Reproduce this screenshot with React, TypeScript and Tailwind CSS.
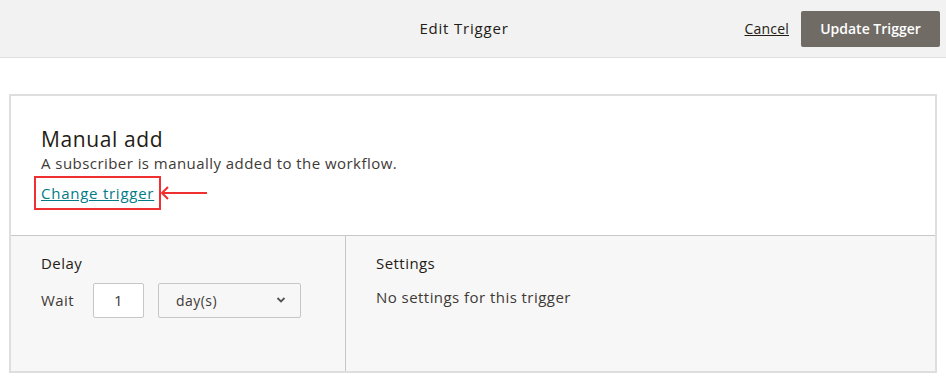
import React from "react";

const App = () => {
  return (
    <div className="min-h-[383px] bg-white font-['Open_Sans',sans-serif] text-[#241c15]">
      <header className="relative flex h-[58px] items-center justify-end border-b border-[#e0e0e0] bg-[#f2f2f2] pr-[6px]">
        <h1 className="absolute left-1/2 ml-[-9px] -translate-x-1/2 text-[15px] tracking-[0.8px] text-[#241c15]">Edit Trigger</h1>
        <a className="mr-[12px] text-[14px] tracking-[0.2px] text-[#241c15] underline">Cancel</a>
        <button className="h-[36px] w-[139px] rounded-[2px] bg-[#716b66] text-[14px] font-semibold text-white">
          Update Trigger
        </button>
      </header>

      <div className="px-[9px] pt-[36px]">
        <div className="border-2 border-[#dedede]">
          <div className="h-[139px] bg-white pl-[30px] pt-[31px] tracking-[0.45px]">
            <h2 className="text-[21px] leading-[24px] tracking-[0.6px] text-[#241c15]">Manual add</h2>
            <p className="mt-[2px] text-[15px] leading-[20px] text-[#3e3a36]">
              A subscriber is manually added to the workflow.
            </p>
            <div className="mt-[3px] flex items-center">
              <span className="-ml-[7px] border-2 border-[#f03030] px-[5px] py-[3px]">
                <a className="text-[15px] leading-[20px] tracking-[0.75px] text-[#007c89] underline">Change trigger</a>
              </span>
              <svg width="48" height="14" viewBox="0 0 48 14" className="-ml-[1px]">
                <path d="M2 7H47" stroke="#f03030" strokeWidth="2" />
                <path d="M8 1L2 7L8 13" stroke="#f03030" strokeWidth="2" fill="none" />
              </svg>
            </div>
          </div>
          <div className="flex h-[136px] border-t border-[#c7c7c7] bg-[#f7f7f7] tracking-[0.45px]">
            <div className="w-[335px] border-r border-[#c7c7c7] pl-[30px] pt-[16px]">
              <div className="text-[15px] font-medium">Delay</div>
              <div className="mt-[8px] flex items-center">
                <span className="w-[52px] text-[15px] text-[#3e3a36]">Wait</span>
                <div className="flex h-[35px] w-[51px] items-center justify-center rounded-[2px] border border-[#c7c7c7] bg-white text-[15px] text-[#3e3a36]">
                  1
                </div>
                <div className="ml-[14px] flex h-[35px] w-[143px] items-center justify-between rounded-[2px] border border-[#c7c7c7] bg-[#f7f7f7] pl-[17px] pr-[14px] text-[14px] text-[#3e3a36]">
                  <span>day(s)</span>
                  <svg width="10" height="6" viewBox="0 0 10 6">
                    <path d="M1.5 1L5 4.5L8.5 1" stroke="#555" strokeWidth="1.8" fill="none" />
                  </svg>
                </div>
              </div>
            </div>
            <div className="flex-1 pl-[30px] pt-[16px]">
              <div className="text-[15px]">Settings</div>
              <p className="mt-[11px] text-[15px] text-[#3e3a36]">No settings for this trigger</p>
            </div>
          </div>
        </div>
      </div>
    </div>
  );
};

export default App;
